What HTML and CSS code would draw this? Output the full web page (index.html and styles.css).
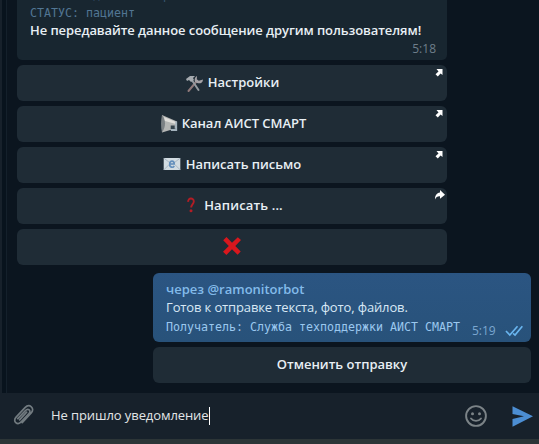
FILE: index.html
```html
<!DOCTYPE html>
<html lang="ru">
<head>
<meta charset="utf-8">
<title>Чат</title>
<link rel="stylesheet" href="styles.css">
</head>
<body>
<div class="app">
  <main class="chat">
    <section class="incoming">
      <div class="bubble bubble-in">
        <div class="code status clipped">         д         р</div>
        <div class="code status">СТАТУС: пациент</div>
        <div class="warning"><span>Не передавайте данное сообщение другим пользователям!</span></div>
        <div class="time">5:18</div>
      </div>
      <div class="button">
        <svg class="tools" width="19" height="19" viewBox="0 0 19 19"><path d="M3.5 17 11 8" stroke="#8d7778" stroke-width="2" stroke-linecap="round"/><path d="M6.5 5.5 13.5 16" stroke="#94999e" stroke-width="2" stroke-linecap="round"/><path d="M1 5 5 2h5L8 4l1 2-3 2-2-2-2 1z" fill="#a6abb0"/><path d="m12 2-.2 3.2 2 1.6L18 5.4C18 8.6 15 10 12.2 9L10 8c-1-3 0-5 2-6z" fill="#a4a1a5"/></svg>
        <span class="t1">Настройки</span>
        <svg class="corner" width="8" height="8" viewBox="0 0 8 8"><path d="M1.500 0H7.500v6L5.600 4.500 2.800 7.500.500 5.200l3-2.700z" fill="#fff"/></svg>
      </div>
      <div class="button">
        <svg class="horn" width="17" height="18" viewBox="0 0 17 18"><path d="M1 0 16 6.5V13L1 17.5z" fill="#b4b6b4"/><path d="M1 0c4 5 4 12 0 17.5C-.3 12-.3 5.5 1 0" fill="#7b8184"/><path d="m3 2 12 5v2L4 6z" fill="#e0dfdb"/><path d="M15.200 6.500V15h-4.400v-3" fill="none" stroke="#a4b3bd" stroke-width="1.900"/><path d="M9.700 10.500h4v3.500h-4z" fill="#34434c"/></svg>
        <span class="t2">Канал АИСТ СМАРТ</span>
        <svg class="corner" width="8" height="8" viewBox="0 0 8 8"><path d="M1.500 0H7.500v6L5.600 4.500 2.800 7.500.500 5.200l3-2.700z" fill="#fff"/></svg>
      </div>
      <div class="button">
        <svg class="mail" width="18" height="12" viewBox="0 0 18 13"><path d="M0 0h18v13H0z" fill="#d2dce2"/><path d="m0 0 9 7 9-7M0 13l6-6m12 6-6-6" fill="none" stroke="#a6b5c2"/><path d="M6.600 6.500h4.800c0-4-4.700-4.200-4.900 0s3.800 4.200 4.900 2" fill="none" stroke="#6490bd" stroke-width="1.800"/></svg>
        <span class="t3">Написать письмо</span>
        <svg class="corner" width="8" height="8" viewBox="0 0 8 8"><path d="M1.500 0H7.500v6L5.600 4.500 2.800 7.500.500 5.200l3-2.700z" fill="#fff"/></svg>
      </div>
      <div class="button">
        <svg class="question" width="8" height="16" viewBox="0 0 8 16"><path d="M1.2 4.8C.8.7 6.8.4 6.8 4.4c0 2.5-2.6 3-2.6 6.2" fill="none" stroke="#b21d25" stroke-width="1.9"/><circle cx="4" cy="13.8" r="1.5" fill="#b21d25"/></svg>
        <span class="t4">Написать ...</span>
        <svg class="corner share" width="10" height="10" viewBox="0 0 10 10"><path d="m5 0 5 4.7-5 4V6.2C2.5 6 1.2 7 0 9.5c0-4 1.5-6.5 5-7z" fill="#fff"/></svg>
      </div>
      <div class="button">
        <svg class="cross" width="18" height="18" viewBox="0 0 18 18"><path d="M3.5 0 9 5.8 14.8.2 18 3.1 12.3 9l5.4 5.6-3.1 3.2L9 12.2 3.4 18 0 14.7 5.8 9 .2 3.3z" fill="#d9171d"/></svg>
      </div>
    </section>
    <section class="outgoing">
      <div class="bubble bubble-out">
        <div class="via"><span>через @ramonitorbot</span></div>
        <div class="ready"><span>Готов к отправке текста, фото, файлов.</span></div>
        <div class="last">
          <span class="code recipient">Получатель: Служба техподдержки АИСТ СМАРТ</span>
          <span class="sent">5:19</span>
          <svg class="ticks" width="19" height="12" viewBox="0 0 19 12"><path d="m1 6 4 4.2L13 1M8.4 8.5l2 1.7L18 1" fill="none" stroke="#69b5ef" stroke-width="1.7"/></svg>
        </div>
      </div>
      <div class="button cancel"><span class="t5">Отменить отправку</span></div>
    </section>
  </main>
  <footer class="composer">
    <svg class="clip" width="22" height="24" viewBox="0 0 22 24"><path d="M4.8 14.7 12.5 6.5c2.7-2.8 6 .3 3.5 3l-7.6 8.2c-4 4.2-9.2-.3-5.3-4.5L12 3.7c4.4-4.7 10.4.6 6.2 5.2l-9 9.700M6.600 15.800l7-7.600" fill="none" stroke="#727b80" stroke-width="1.7" stroke-linecap="round"/></svg>
    <div class="field"><span>Не пришло уведомление</span><i class="caret"></i></div>
    <svg class="smile" width="22" height="22" viewBox="0 0 22 22"><circle cx="11" cy="11" r="9.9" fill="none" stroke="#7b8387" stroke-width="1.9"/><circle cx="7.5" cy="8.7" r="1.5" fill="#7b8387"/><circle cx="14.5" cy="8.7" r="1.5" fill="#7b8387"/><path d="M6 13.5c2.5 3.2 7.5 3.2 10 0" fill="none" stroke="#7b8387" stroke-width="1.8" stroke-linecap="round"/></svg>
    <svg class="send" width="21" height="21" viewBox="0 0 21 21"><path d="M.5.3 21 10.3.5 20.7V13L12 10.3.5 8z" fill="#4c8ed3"/></svg>
  </footer>
</div>
</body>
</html>
```
FILE: styles.css
```css
* { box-sizing: border-box; }
body { margin: 0; background: #0b151f; font: 13px/18px "Open Sans", sans-serif; color: #e8eff4; }
.app { width: 539px; height: 444px; overflow: hidden; display: flex; flex-direction: column; border-bottom: 5px solid #2c3537; }
.chat { height: 393px; flex: none; border-left: 2px solid #17212b; box-shadow: inset 4px 0 #08131d, inset 5px 0 #14202b; }
span { white-space: pre; }
.incoming { margin-left: 15px; width: 430px; display: flex; flex-direction: column; gap: 5px; }
.bubble-in { height: 60px; overflow: hidden; padding: 0 11px 0 13px; background: #182630; border-radius: 0 0 5px 5px; }
.code { font: 11.63px/18px "DejaVu Sans Mono", monospace; white-space: pre; }
.status { color: #527694; }
.clipped { margin-top: -14px; color: #39566f; }
.bubble-in .warning { margin-top: -1px; font-weight: 600; letter-spacing: -0.08px; }
.bubble-in .time { margin-top: 1px; text-align: right; font-size: 12px; color: #6e7e8a; }
.button { position: relative; height: 36px; flex: none; display: flex; justify-content: center; align-items: center; gap: 4px; background: #1f2c36; border-radius: 6px; font-weight: 600; }
.button span { padding-bottom: 2px; }
.cross, .mail { margin-bottom: 2px; }
.horn { margin: 0 0 1px 3px; }
.t2 { letter-spacing: -0.03px; }
.t3 { letter-spacing: -0.03px; margin-left: 1px; }
.question { margin: 0 0 2px 6px; }
.t4 { margin-left: 5px; letter-spacing: 0.14px; }
.corner { position: absolute; top: 4px; right: 4px; }
.share { top: 2px; right: 2px; }
.outgoing { margin: 8px 0 0 151px; width: 378px; display: flex; flex-direction: column; gap: 5px; }
.bubble-out { height: 69px; padding: 7px 8px 0 13px; border-radius: 6px; background: linear-gradient(#2b5582, #28527a); }
.via { font-weight: 600; color: #83bbea; }
.ready { color: #d8e8f5; letter-spacing: -0.13px; }
.last { display: flex; align-items: center; }
.recipient { margin-top: -3px; color: #9bc8ef; }
.sent { margin: 6px 0 0 12px; font-size: 12px; color: #7ba7d0; }
.ticks { margin: 5px 0 0 9px; }
.composer { height: 46px; flex: none; display: flex; align-items: center; padding: 0 6px 0 14px; background: #17212b; }
.clip { margin-left: -1px; margin-right: 1px; }
.field { display: flex; align-items: center; margin-left: 15px; width: 414px; color: #e2e5e7; letter-spacing: -0.09px; }
.field span { padding-bottom: 2px; }
.caret { width: 1px; height: 18px; background: #fff; }
.send { margin-left: 25px; }
```
